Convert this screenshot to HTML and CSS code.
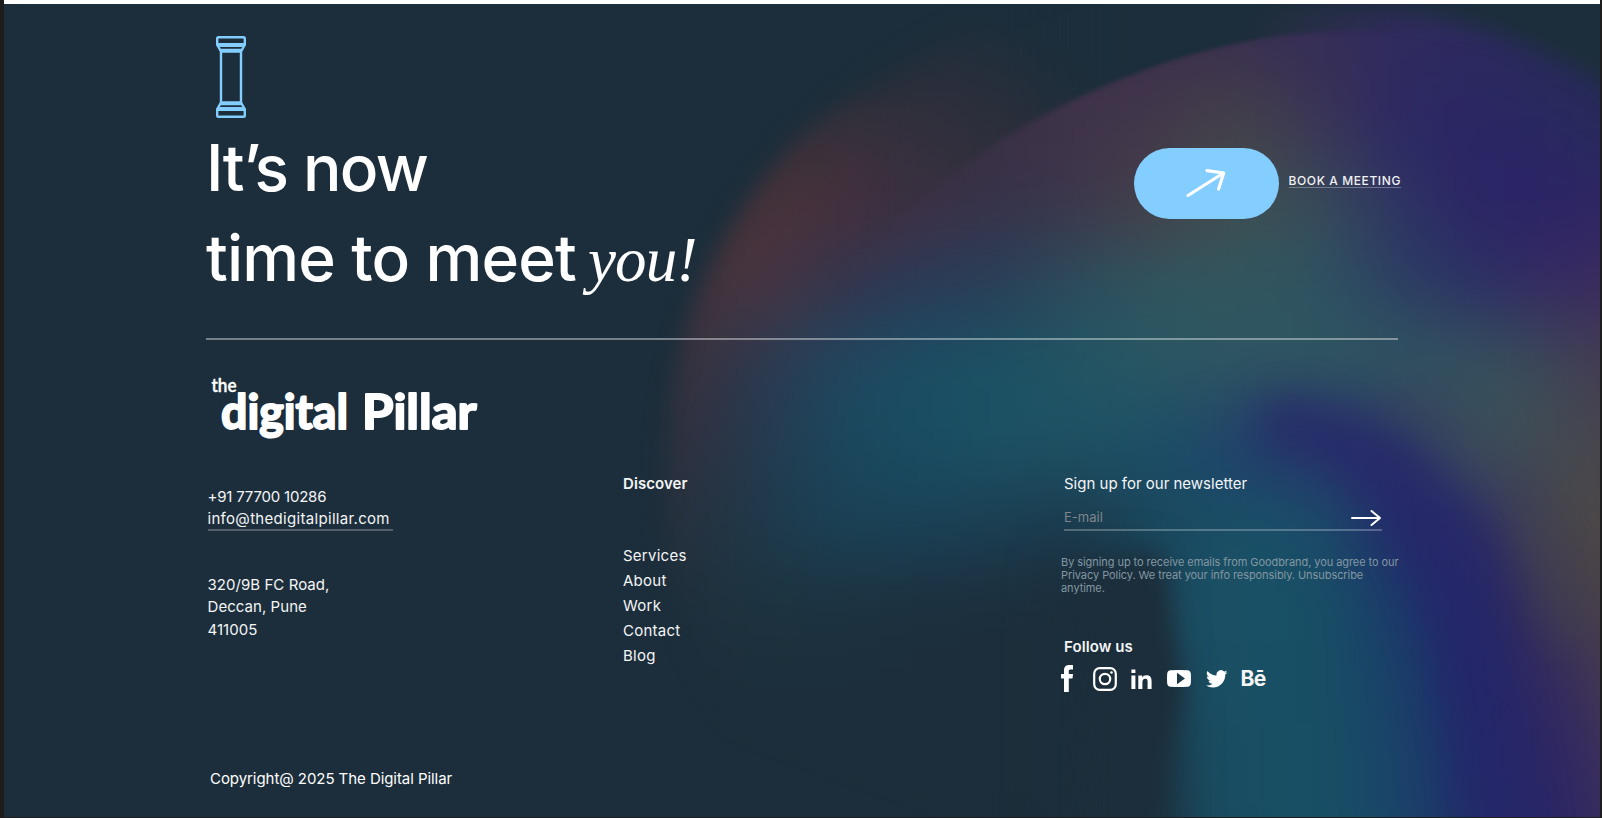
FILE: index.html
```html
<!DOCTYPE html>
<html lang="en">
<head>
<meta charset="utf-8">
<title>The Digital Pillar</title>
<link rel="stylesheet" href="styles.css">
</head>
<body>
<footer class="footer">
  <svg class="glow" viewBox="4 4 1596 813" preserveAspectRatio="none" aria-hidden="true">
    <defs>
      <filter id="b3" filterUnits="userSpaceOnUse" x="400" y="-200" width="1500" height="1400" color-interpolation-filters="sRGB"><feGaussianBlur stdDeviation="2.5"/></filter>
      <filter id="b10" filterUnits="userSpaceOnUse" x="400" y="-200" width="1500" height="1400" color-interpolation-filters="sRGB"><feGaussianBlur stdDeviation="11"/></filter>
      <filter id="b20" filterUnits="userSpaceOnUse" x="400" y="-200" width="1500" height="1400" color-interpolation-filters="sRGB"><feGaussianBlur stdDeviation="22"/></filter>
      <filter id="b30" filterUnits="userSpaceOnUse" x="400" y="-200" width="1500" height="1400" color-interpolation-filters="sRGB"><feGaussianBlur stdDeviation="37"/></filter>
      <mask id="leftEdge" maskUnits="userSpaceOnUse" x="0" y="0" width="1700" height="900">
        <path d="M1100 -20C980 10 870 66 790 146C735 208 705 268 688 325C670 385 664 440 666 520C670 600 690 660 740 720L1800 1100V-300H1100Z" fill="#fff" filter="url(#b10)"/>
      </mask>
      <linearGradient id="capFill" gradientUnits="userSpaceOnUse" x1="960" y1="190" x2="1030" y2="30"><stop offset="0" stop-color="#34303d"/><stop offset=".5" stop-color="#2a2e3b"/><stop offset="1" stop-color="#1c2e3b"/></linearGradient>
      <linearGradient id="capFill2" gradientUnits="userSpaceOnUse" x1="1010" y1="0" x2="1130" y2="0"><stop offset="0" stop-color="#1c2e3b" stop-opacity="0"/><stop offset="1" stop-color="#1c2e3b"/></linearGradient>
      <linearGradient id="capFade" gradientUnits="userSpaceOnUse" x1="860" y1="0" x2="980" y2="0"><stop offset="0" stop-color="#000"/><stop offset="1" stop-color="#fff"/></linearGradient>
      <linearGradient id="capEnd" gradientUnits="userSpaceOnUse" x1="1240" y1="0" x2="1400" y2="0"><stop offset="0" stop-color="#fff"/><stop offset="1" stop-color="#fff" stop-opacity="0"/></linearGradient>
      <linearGradient id="topFade" gradientUnits="userSpaceOnUse" x1="0" y1="10" x2="0" y2="110"><stop offset="0" stop-color="#1c2e3b"/><stop offset=".25" stop-color="#1c2e3b" stop-opacity=".85"/><stop offset="1" stop-color="#1c2e3b" stop-opacity="0"/></linearGradient>
      <mask id="capMask" maskUnits="userSpaceOnUse" x="0" y="-50" width="1700" height="900"><rect x="800" y="-50" width="440" height="500" fill="url(#capFade)"/><rect x="1240" y="-50" width="200" height="500" fill="url(#capEnd)"/></mask>
    </defs>
    <g mask="url(#leftEdge)">
      <g id="mesh" filter="url(#b30)"></g>
      <path d="M700 260C730 200 770 160 810 130" stroke="#49343a" stroke-width="30" opacity=".35" fill="none" filter="url(#b20)"/>
      <path d="M1260 422C1350 425 1415 480 1446 570C1475 670 1505 760 1512 960" stroke="#26266a" stroke-width="52" opacity=".75" fill="none" filter="url(#b20)"/>
      <path d="M1390 395C1480 430 1540 510 1572 640" stroke="#454b50" stroke-width="26" opacity=".45" fill="none" filter="url(#b20)"/>
      <rect x="780" y="0" width="270" height="110" fill="url(#topFade)"/>
      <path d="M1120 -100V24L1240 14C1330 4 1420 6 1500 34C1550 52 1600 76 1700 140V-100Z" fill="#1c2e3b" filter="url(#b10)"/>
      <g mask="url(#capMask)">
        <path d="M800 -80V290C900 220 960 164 1010 134C1110 74 1220 32 1350 29L1440 29V-80Z" fill="url(#capFill)" filter="url(#b3)"/>
        <path d="M1000 -80V139C1110 74 1220 32 1350 29L1440 29V-80Z" fill="url(#capFill2)" filter="url(#b3)"/>
      </g>
    </g>
    <path d="M1050 570L1150 556C1160 600 1162 650 1174 700L1180 1000H1050Z" fill="#1c2e3b" filter="url(#b20)"/>
    <path d="M1090 590C1130 560 1152 550 1163 560C1166 610 1170 650 1182 690C1170 740 1140 800 1110 1000H1080Z" fill="#1c2e3b" filter="url(#b10)"/>
  </svg>

  <div class="page">
    <section class="hero">
      <div class="intro">
        <svg class="pillar" viewBox="0 0 30 82" fill="none" stroke="#83ceff" stroke-width="2.400">
          <path d="M2.500 1.200h25q1.300 0 1.300 1.300v5.700H1.200V2.500q0-1.300 1.300-1.300ZM2.500 80.800h25q1.300 0 1.300-1.300v-5.700H1.200v5.700q0 1.300 1.300 1.300Z"/>
          <path d="M1.500 9.200h27L25 15.500H5ZM1.500 72.800h27L25 66.500H5ZM5 15v52M25 15v52"/>
          <path d="M4 10.500h22M4 71.500h22" stroke-width="1"/>
          <path d="M5 14.300h20M5 67.700h20" stroke-width="3"/>
        </svg>
        <h1 class="title"><span class="line l1">It’s now</span><span class="line"><span class="l2">time to meet</span><em class="you">you!</em></span></h1>
      </div>
      <div class="booking">
        <a class="pill"><svg viewBox="0 0 40 30" width="40" height="30" fill="none" stroke="#fff" stroke-width="3.200" stroke-linecap="round" stroke-linejoin="round"><path d="M2 26.500 37.500 4M21 1.600 37.700 4 32.600 20"/></svg></a>
        <a class="book">BOOK A MEETING</a>
      </div>
    </section>

    <svg class="logo" viewBox="0 0 280 74" role="img" aria-label="the digital Pillar">
      <g fill="#fff" stroke="#fff" stroke-linejoin="round" stroke-linecap="round">
        <text class="logo-sm" x="5.500" y="18" textLength="25" lengthAdjust="spacingAndGlyphs" stroke-width=".4">the</text>
        <text class="logo-lg" x="15" y="55" textLength="127" lengthAdjust="spacingAndGlyphs" stroke-width="2">digital</text>
        <text class="logo-lg" x="156" y="55" textLength="114.500" lengthAdjust="spacingAndGlyphs" stroke-width="2">Pillar</text>
      </g>
    </svg>

    <section class="columns">
      <div class="contact">
        <p class="phone">+91 77700 10286</p>
        <a class="mail">info@thedigitalpillar.com</a>
        <address class="address">320/9B FC Road,<br>Deccan, Pune<br>411005</address>
      </div>
      <nav class="discover">
        <h2 class="label strong">Discover</h2>
        <ul class="links"><li>Services</li><li>About</li><li>Work</li><li>Contact</li><li>Blog</li></ul>
      </nav>
      <div class="news">
        <h2 class="label">Sign up for our newsletter</h2>
        <div class="field"><span class="hint">E-mail</span>
          <svg viewBox="0 0 32 18" width="32" height="18" fill="none" stroke="#fff" stroke-width="2" stroke-linecap="round" stroke-linejoin="round"><path d="M2 9H30M21.500 2 30 9 21.500 16"/></svg>
        </div>
        <p class="fine">By signing up to receive emails from Goodbrand, you agree to our<br>Privacy Policy. We treat your info responsibly. Unsubscribe<br>anytime.</p>
        <h2 class="label strong follow">Follow us</h2>
        <div class="social">
          <svg viewBox="0 0 12 27" width="12" height="27" fill="#fff"><path d="M3 27V13.500H0V9h3V5.500C3 1.800 4.800 0 8.500 0H12v4.500H9.500C8 4.500 7.800 5.200 7.800 6.300V9H12l-.5 4.500H7.800V27Z"/></svg>
          <svg class="ig" viewBox="0 0 24 24" width="24" height="24" fill="none" stroke="#fff" stroke-width="2.200"><rect x="1.200" y="1.200" width="21.600" height="21.600" rx="5.500"/><circle cx="12" cy="12" r="5.200"/><circle cx="18.500" cy="5.500" r="1.300" fill="#fff" stroke="none"/></svg>
          <svg class="in" viewBox="0 0 21 20" width="21" height="20" fill="#fff"><path d="M.4 6.500h4V20h-4ZM.4.500h4v3.600h-4ZM7.300 6.500h3.900v1.900c.7-1.300 2.200-2.200 4.200-2.200 4.200 0 5.200 2.700 5.200 6.400V20h-4v-6.600c0-1.600 0-3.700-2.300-3.700s-2.900 1.800-2.900 3.600V20H7.300Z"/></svg>
          <svg class="yt" viewBox="0 0 24 17" width="24" height="17" fill="#fff"><path fill-rule="evenodd" d="M3.500.3Q12-.3 20.500.3 23.500.5 23.800 3.500 24.200 8.500 23.800 13.500 23.500 16.500 20.500 16.700 12 17.300 3.500 16.700.5 16.500.2 13.500-.2 8.500.2 3.500.5.5 3.500.3ZM10 2.800v11.400l8-5.700Z"/></svg>
          <svg class="tw" viewBox="0 0 24 20" width="21.500" height="18" fill="#fff"><path d="M24 2.400a9.800 9.800 0 0 1-2.800.8A5 5 0 0 0 23.300.5a9.800 9.800 0 0 1-3.100 1.200A4.900 4.900 0 0 0 11.800 6.100 14 14 0 0 1 1.700 1a4.900 4.900 0 0 0 1.500 6.500A4.900 4.900 0 0 1 1 6.900v.1a4.900 4.900 0 0 0 3.900 4.800 4.900 4.900 0 0 1-2.200.1 4.900 4.900 0 0 0 4.600 3.400A9.900 9.900 0 0 1 0 17.300a14 14 0 0 0 7.500 2.200c9.100 0 14-7.500 14-14v-.6A10 10 0 0 0 24 2.400Z"/></svg>
          <span class="be">Bē</span>
        </div>
      </div>
    </section>
    <p class="copy">Copyright@ 2025 The Digital Pillar</p>
  </div>
</footer>
<script src="glow.js"></script>
</body>
</html>
```
FILE: glow.js
```js
// Colour table of the background glow: 80px cells, blurred into one another.
const rows = [
  "1c2e3b 1c2e3b 1f2e3a 222e3a 3b3048 3c304a 3c304c 3a3050 352e56 2f2b5e 2c2a5e 272b56 232c4a",
  "1c2e3b 2f2f38 35303a 33303b 3b3044 3f344a 42384b 454347 3b3456 2c2864 2a2565 292860 252b58",
  "30303a 49333a 47303b 3f3045 36324a 3e364b 464149 3e5052 384c58 2e3363 2a2466 2c2466 2e2664",
  "42333a 4b3440 33334d 2a3a58 293f58 2b4e5c 2f5660 30565f 2d5361 2b3e63 2c2f64 372a61 3e2d5c",
  "39313c 2b3850 20475f 1b4e63 1a5264 225564 2a5662 2f5661 2f565f 31565f 34535c 3e4556 48364f",
  "2f303f 26394e 1a475d 194d62 1c5164 1e5264 1b4e67 20406b 27356c 2b306a 3b4f5b 444b50 49414d",
  "27303c 1d394a 1b4156 1a4157 1b3e53 1b394c 1a485e 195166 1a4c68 23296b 2a2869 4a4748 4e4844",
  "1f2f3c 1d333f 1c3240 1c2f3d 1c2e3b 1c2e3b 1b4c62 1a5065 175064 1b396b 22226a 40384f 4f4644",
  "1c2e3b 1c2e3b 1c2e3b 1c2e3b 1c2e3b 1c2e3b 1b4b60 1a4f64 174f64 1a4069 20246b 352a5e 4b404a",
  "1c2e3b 1c2e3b 1c2e3b 1c2e3b 1c2e3b 1c2e3b 1b475b 194e63 175064 1a4369 20286b 2e2563 453658",
  "1c2e3b 1c2e3b 1c2e3b 1c2e3b 1c2e3b 1c2e3b 1c4254 194e63 175064 1a4468 202c6a 2a2466 3e3158",
];
const mesh = document.getElementById("mesh");
const last = rows.length - 1;
rows.forEach((row, r) => {
  const cells = row.split(" ");
  cells.forEach((color, c) => {
    const rect = document.createElementNS("http://www.w3.org/2000/svg", "rect");
    const end = c === cells.length - 1;
    rect.setAttribute("x", c === 0 ? 480 : 640 + c * 80);
    rect.setAttribute("y", r === 0 ? -156 : 4 + r * 80);
    rect.setAttribute("width", end ? 240 : c === 0 ? 241 : 81);
    rect.setAttribute("height", r === 0 ? 241 : r === last ? 240 : 81);
    rect.setAttribute("fill", "#" + color);
    mesh.appendChild(rect);
  });
});
```
FILE: styles.css
```css
* { box-sizing: border-box; }
body {
  margin: 0;
  height: 818px;
  overflow: hidden;
  padding: 0 2px 1px 4px;
  background: #1e1d1e;
  color: #fff;
  font-family: Inter, "Noto Sans", sans-serif;
  font-size: 15px;
  line-height: 22px;
}
h1, h2, p, ul { margin: 0; padding: 0; font-weight: 400; }
.footer { position: relative; height: 817px; border-top: 4px solid #fff; background: #1c2e3b; overflow: hidden; }
.glow { position: absolute; inset: 0; width: 100%; height: 100%; }
.page { position: relative; width: 1194px; margin-left: 202px; }

.hero {
  display: flex;
  justify-content: space-between;
  align-items: flex-start;
  width: 1192px;
  height: 336px;
  padding-top: 32px;
  border-bottom: 2px solid rgba(255, 255, 255, .4);
}
.pillar { display: block; width: 30px; height: 82px; margin: 0 0 5px 10px; }
.title { font-size: 64px; line-height: 90px; font-weight: 500; white-space: nowrap; }
.line { display: block; }
.l1 { letter-spacing: -1.600px; }
.l2 { letter-spacing: -.850px; }
.you { font-family: "Liberation Serif", serif; font-size: 63px; font-weight: 400; margin-left: 12px; line-height: 1; letter-spacing: -.800px; }
.booking { display: flex; align-items: flex-start; margin: 112px -3px 0 0; gap: 10px; }
.pill {
  display: flex; align-items: center; justify-content: center;
  width: 145px; height: 71px; border-radius: 36px; background: #83ceff;
}
.book { margin-top: 25px; font-size: 12px; line-height: 15px; font-weight: 500; letter-spacing: .600px; border-bottom: 1px solid rgba(255, 255, 255, .3); color: #f1f1f3; height: 15px; }

.logo { display: block; width: 280px; height: 74px; margin-top: 34px; overflow: visible; }
.logo-sm { font: 600 20px Lato, sans-serif; }
.logo-lg { font: 700 48px Lato, sans-serif; }

.columns { display: grid; grid-template-columns: 415.500px 438px 337px; padding: 25px 0 0 1.500px; color: #f4f5f6; }
.contact { padding-top: 13px; }
.phone { letter-spacing: -.200px; }
.mail { display: block; width: 185px; height: 23px; border-bottom: 2px solid #555e6b; white-space: nowrap; letter-spacing: .310px; line-height: 21px; }
.address { font-style: normal; margin-top: 43px; line-height: 22.300px; letter-spacing: .050px; }
.label { font-size: 15px; line-height: 22px; }
.strong { font-weight: 600; letter-spacing: .080px; }
.links { list-style: none; margin-top: 48px; line-height: 25px; letter-spacing: .250px; }
.news .label { margin-left: 3px; }
.field { display: flex; justify-content: space-between; align-items: flex-end; width: 318px; height: 36px; margin-left: 3px; padding: 0 0 2px; border-bottom: 2px solid rgba(255, 255, 255, .25); }
.hint { font-size: 13px; line-height: 19px; color: #80868c; }
.fine { margin-top: 25px; font-size: 11px; line-height: 13px; letter-spacing: -.065px; color: #8297a1; white-space: nowrap; }
.follow { margin-top: 41px; }
.social { display: flex; align-items: center; height: 27px; margin-top: 7px; }
.ig { margin-left: 20px; }
.in { margin-left: 14px; }
.yt { margin-left: 15px; }
.tw { margin-left: 15px; }
.be { margin-left: 13px; font-size: 21px; font-weight: 700; letter-spacing: -.700px; }
.copy { margin: 76px 0 0 4px; letter-spacing: -.060px; }
```
